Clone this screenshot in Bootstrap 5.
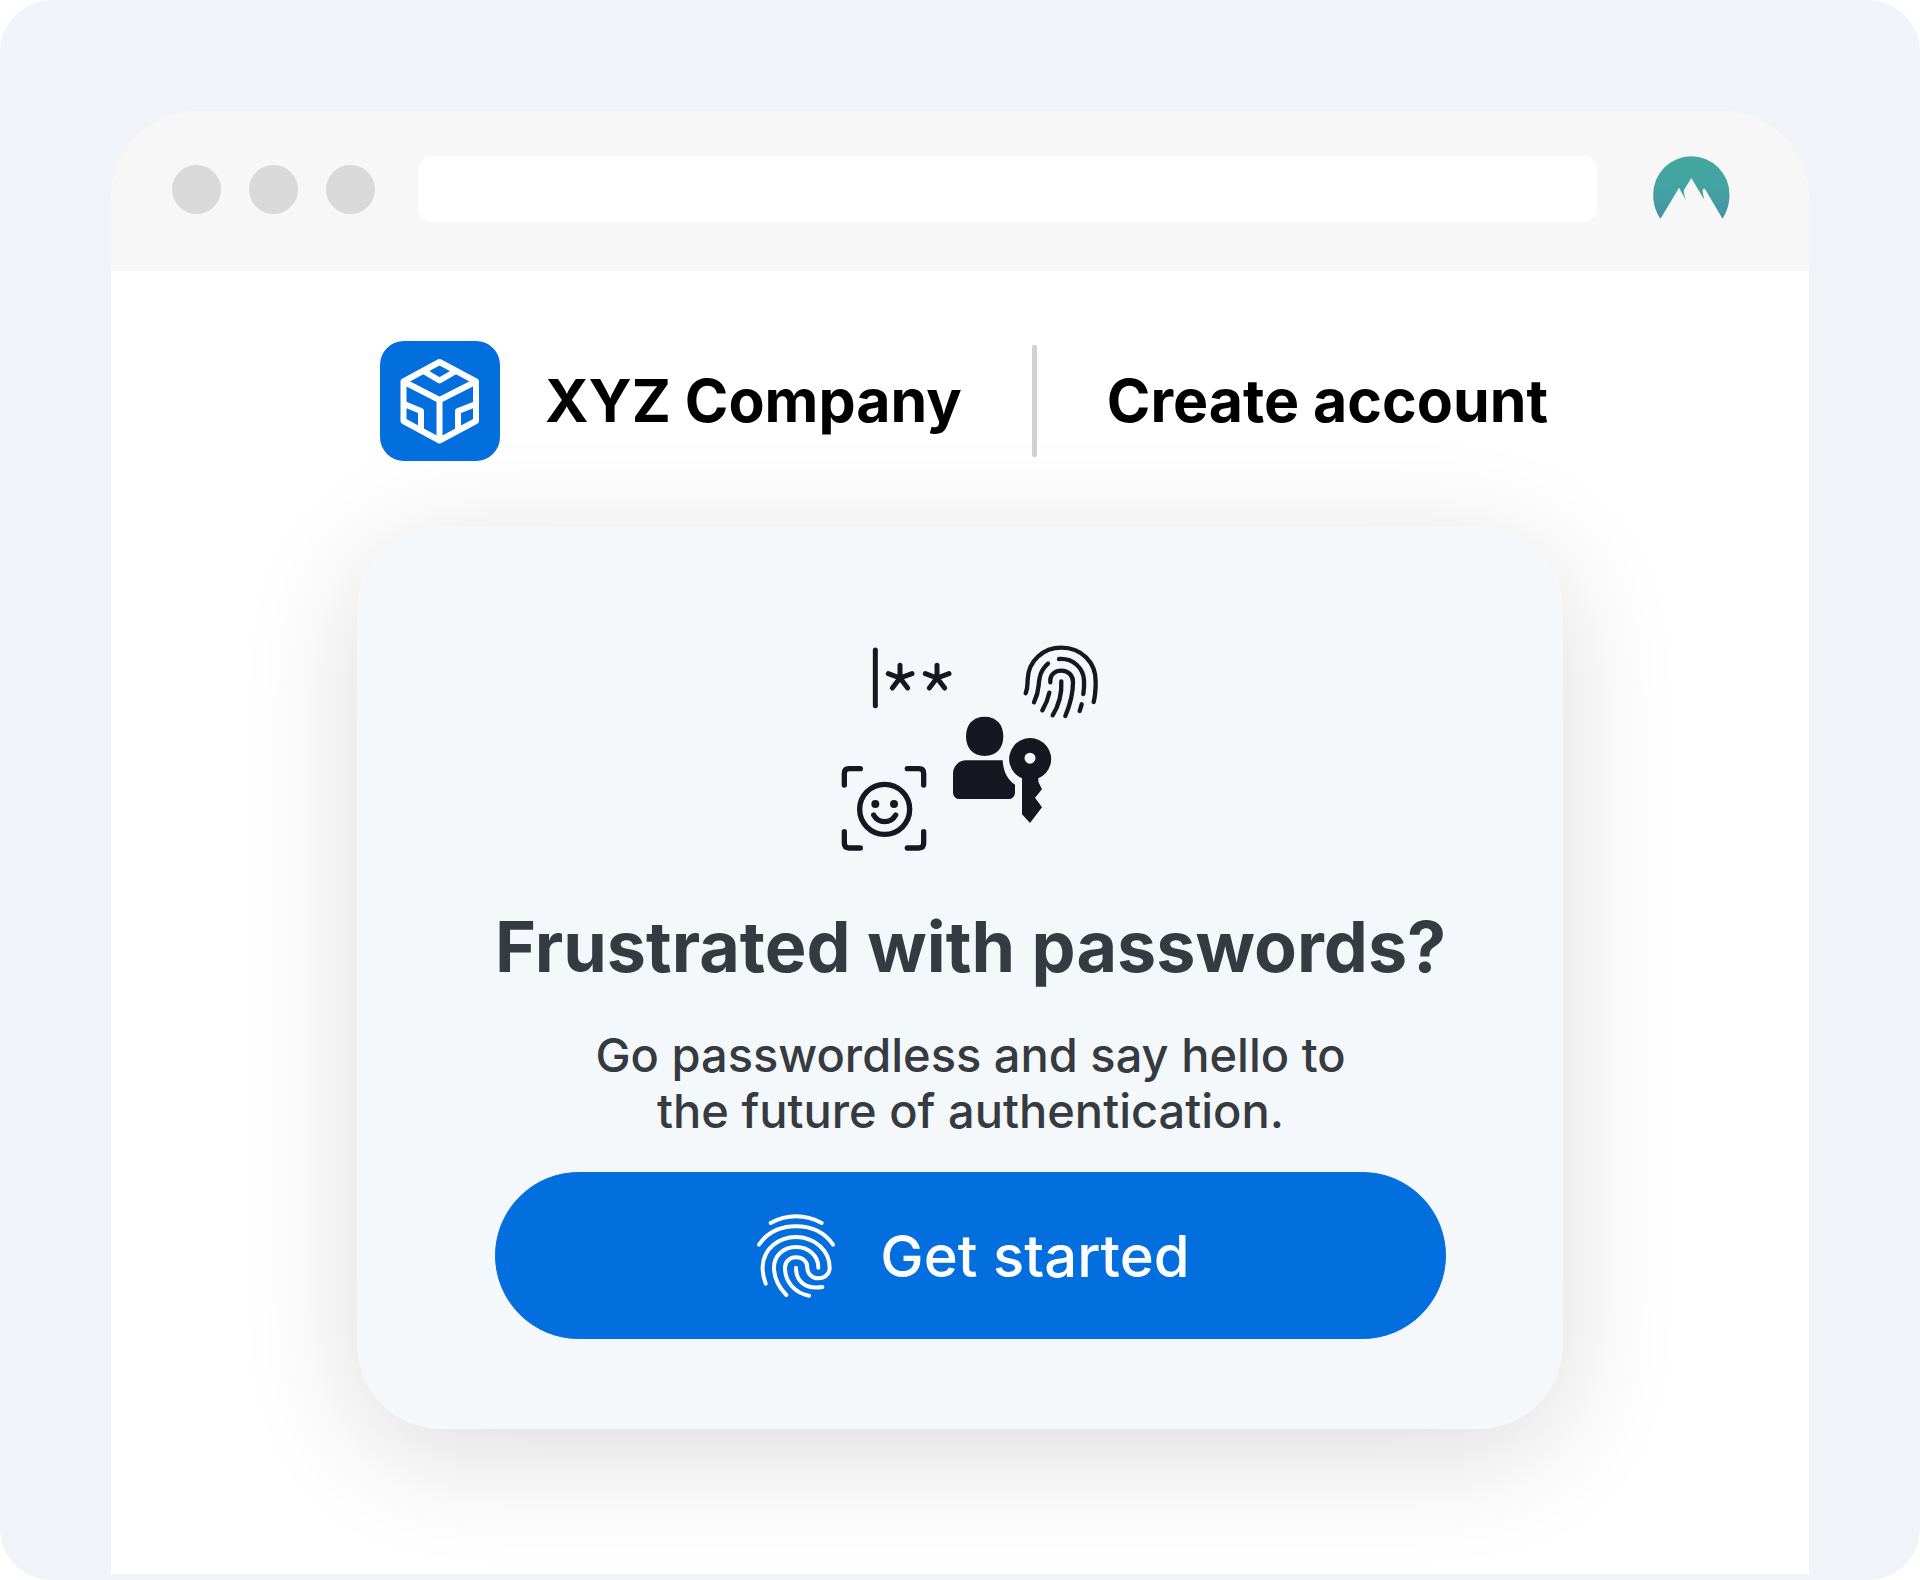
<!DOCTYPE html>
<html lang="en">
<head>
<meta charset="utf-8">
<meta name="viewport" content="width=device-width, initial-scale=1">
<title>XYZ Company – Create account</title>
<link href="https://cdn.jsdelivr.net/npm/bootstrap@5.3.0/dist/css/bootstrap.min.css" rel="stylesheet">
<style>
  body { background: #fff; font-family: Inter, "Liberation Sans", sans-serif; }
  .backdrop { background: #f0f4f9; border-radius: 52px; padding: 111px 111px 6px; }
  .browser { background: #fff; border-radius: 88px 88px 0 0; }
  .browser-bar { background: #f7f7f7; border-radius: 88px 88px 0 0; padding: 45px 79px 49px 61px; }
  .dots { gap: 28px; margin-right: 43px; }
  .dot { width: 49px; height: 49px; background: #d9d9d9; }
  .address { height: 66px; border-radius: 14px; margin-right: 56px; }
  .page-main { padding: 70px 24px 144px; }
  .brand-row { gap: 70px; margin-bottom: 65px; padding-left: 8px; color: #000; }
  .brand { gap: 45px; }
  .tile { background: #036fde; border-radius: 24px; }
  .head-text { font-size: 59px; line-height: 72px; font-weight: 700; }
  .divider { width: 5px; height: 112px; border-radius: 2px; background: #d1d1d1; }
  .promo { max-width: 1206px; background: #f4f8fb; border-radius: 84px; padding: 119px 117px 90px 138px; color: #363a41; box-shadow: 0 25px 120px rgba(0, 0, 0, .14); }
  .promo-title { font-size: 70px; line-height: 84px; font-weight: 700; margin: 52px 0 38px; }
  .promo-text { font-size: 47px; line-height: 56px; font-weight: 500; margin-bottom: 33px; }
  .start { --bs-btn-bg: #036fde; --bs-btn-border-color: #036fde; --bs-btn-hover-bg: #0262c4; height: 167px; gap: 45px; padding-left: 18px; font-size: 58px; line-height: 72px; font-weight: 500; }
</style>
</head>
<body>
<div class="backdrop min-vh-100 d-flex">
  <div class="browser flex-grow-1">
    <div class="browser-bar d-flex align-items-center">
      <div class="dots d-flex">
        <span class="dot rounded-circle"></span>
        <span class="dot rounded-circle"></span>
        <span class="dot rounded-circle"></span>
      </div>
      <input type="text" class="address form-control border-0 flex-fill" aria-label="Address">
      <svg class="flex-shrink-0 align-self-start" width="77" height="63" viewBox="278 196 231 190" role="img" aria-label="VPN extension">
        <defs><linearGradient id="teal" x1="0" y1="0" x2="0" y2="1"><stop offset="0" stop-color="#43a6a0"/><stop offset=".5" stop-color="#44a3a2"/><stop offset="1" stop-color="#4392a5"/></linearGradient></defs>
        <path fill="url(#teal)" d="M300 385C286 365 278 341 278 312A115 115 0 0 1 508 312C508 341 500 365 487 385L437 300Q430 288 427 300Q428 312 432 328L393 262L370 300Q371 312 376 328L356 292Z"/>
      </svg>
    </div>
    <main class="page-main">
      <header class="brand-row d-flex justify-content-center align-items-center">
        <div class="brand d-flex align-items-center">
          <svg class="tile" width="120" height="120" viewBox="0 0 120 120" fill="none" stroke="#fff" stroke-width="6" stroke-linejoin="round" aria-hidden="true">
            <path d="M59.5 21L96 40.500V80L59.500 99.500L23.500 80V40.500Z"/>
            <path d="M23.500 40.500L59.500 59L96 40.500M59.500 59V99.500"/>
            <path d="M43.500 30L59.500 39.500L76 30"/>
            <path d="M24 63L41 70V88M96 63L78 70V88"/>
          </svg>
          <span class="head-text">XYZ Company</span>
        </div>
        <div class="divider"></div>
        <h1 class="head-text mb-0">Create account</h1>
      </header>
      <section class="promo mx-auto text-center">
        <svg width="260" height="208" viewBox="63 75 780 624" class="d-block mx-auto" fill="none" stroke="#151820" stroke-linecap="round" stroke-linejoin="round" aria-hidden="true">
          <path stroke-width="15" d="M166 90V257"/>
          <g id="star" stroke-width="15"><path d="M240 174V136M240 174L205 161M240 174L276 161M240 174L217 204M240 174L263 204"/></g>
          <use href="#star" x="111"/>
          <g transform="translate(540 30)" stroke-width="13">
            <path d="M77 190C84 172 82 162 83 148C85 92 130 53 184 53C245 53 288 98 287 155C287 180 285 200 281 216"/>
            <path d="M102 217C120 180 113 170 119 144C122 125 130 113 144 101"/>
            <path d="M177 87C220 84 250 115 252 150C253 168 252 180 250 192"/>
            <path d="M151 157V150C151 134 165 122 184 122C205 122 219 136 219 156C219 195 210 225 196 258"/>
            <path d="M184 154C186 195 175 228 158 256M148 188C144 208 136 226 127 241M245 223L239 243"/>
          </g>
          <g fill="#151820" stroke="none">
            <path d="M494 290C530 290 550 314 550 349C550 384 530 408 494 408C458 408 438 384 438 349C438 314 458 290 494 290Z"/>
            <path d="M438 421H548C550 455 562 478 585 494V518A19 19 0 0 1 566 537H418A19 19 0 0 1 399 518V460A39 39 0 0 1 438 421Z"/>
            <path fill-rule="evenodd" d="M606 475A63 63 0 1 1 655 475V485L666 508L645 533L666 562L630 609L606 583ZM630 398A16 16 0 1 0 630 431A16 16 0 1 0 630 398Z"/>
            <circle cx="166" cy="552" r="12"/><circle cx="222" cy="552" r="12"/>
          </g>
          <g stroke-width="16">
            <path d="M73 495V460Q73 446 87 446H121M262 446H297Q311 446 311 460V495M311 635V670Q311 684 297 684H262M121 684H87Q73 684 73 670V635"/>
            <circle cx="194" cy="568" r="75"/>
            <path d="M161 585Q172 605 194 605Q216 605 227 585"/>
          </g>
        </svg>
        <h2 class="promo-title text-nowrap">Frustrated with passwords?</h2>
        <p class="promo-text">Go passwordless and say hello to<br>the future of authentication.</p>
        <button type="button" class="start btn btn-primary rounded-pill w-100 d-flex justify-content-center align-items-center">
          <svg width="78" height="84" viewBox="52 71 234 252" fill="none" stroke="#fff" stroke-width="12" stroke-linecap="round" aria-hidden="true">
            <path d="M93 98Q130 78 169 78Q208 78 246 98"/>
            <path d="M58 163C82 128 122 108 169 108C216 108 256 128 280 163"/>
            <path d="M78 280C70 258 68 245 69 228C72 175 117 140 169 140C225 140 270 182 270 232C270 252 254 264 236 264C217 264 203 250 203 232C203 212 188 201 169 201C150 201 136 214 136 232C136 275 165 308 208 316"/>
            <path d="M140 314C115 288 103 262 103 232C103 196 132 170 169 170C206 170 236 196 236 232"/>
            <path d="M169 232C169 272 196 298 248 290"/>
          </svg>
          <span>Get started</span>
        </button>
      </section>
    </main>
  </div>
</div>
<script src="https://cdn.jsdelivr.net/npm/bootstrap@5.3.0/dist/js/bootstrap.bundle.min.js"></script>
</body>
</html>
